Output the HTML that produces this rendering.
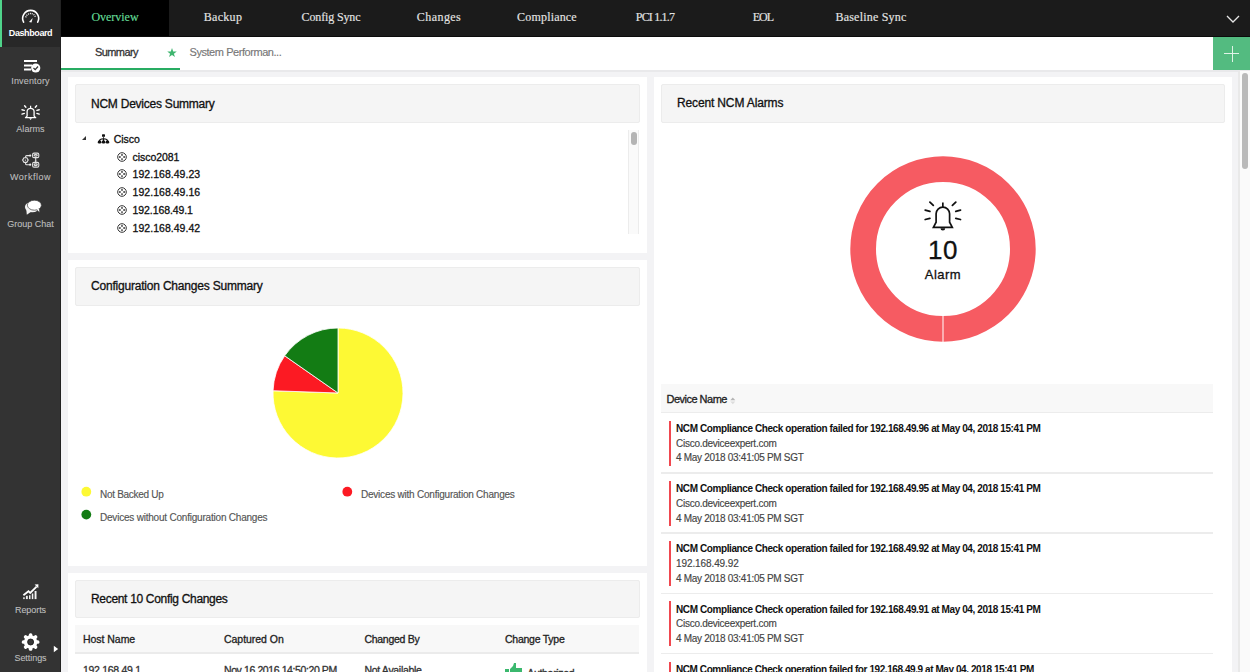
<!DOCTYPE html>
<html><head><meta charset="utf-8">
<style>
*{margin:0;padding:0;box-sizing:border-box}
html,body{width:1250px;height:672px;overflow:hidden;background:#f3f3f5;font-family:"Liberation Sans",sans-serif;position:relative}
.r{position:absolute}
.t{position:absolute;line-height:1;white-space:nowrap}
</style></head><body>
<div class="r" style="left:0px;top:0px;width:61px;height:672px;background:#333333;"></div>
<div class="r" style="left:0px;top:0px;width:61px;height:47px;background:#282828;"></div>
<div class="r" style="left:0px;top:0px;width:2px;height:47px;background:#4fd38a;"></div>
<div class="r" style="left:60px;top:0px;width:1px;height:672px;background:#222;"></div>
<div class="t" style="left:0px;top:29.38px;font-size:9px;color:#fff;font-weight:700;letter-spacing:-0.402px;width:61px;text-align:center;">Dashboard</div>
<div class="t" style="left:0px;top:77.28px;font-size:9px;color:#bdbdbd;letter-spacing:0.159px;width:61px;text-align:center;-webkit-text-stroke:0.1px #bdbdbd;">Inventory</div>
<div class="t" style="left:0px;top:125.38px;font-size:9px;color:#bdbdbd;letter-spacing:0.057px;width:61px;text-align:center;-webkit-text-stroke:0.1px #bdbdbd;">Alarms</div>
<div class="t" style="left:0px;top:172.88px;font-size:9px;color:#bdbdbd;letter-spacing:0.522px;width:61px;text-align:center;-webkit-text-stroke:0.1px #bdbdbd;">Workflow</div>
<div class="t" style="left:0px;top:220.28px;font-size:9px;color:#bdbdbd;letter-spacing:-0.003px;width:61px;text-align:center;-webkit-text-stroke:0.1px #bdbdbd;">Group Chat</div>
<div class="t" style="left:0px;top:606.48px;font-size:9px;color:#bdbdbd;letter-spacing:-0.069px;width:61px;text-align:center;-webkit-text-stroke:0.1px #bdbdbd;">Reports</div>
<div class="t" style="left:0px;top:654.38px;font-size:9px;color:#bdbdbd;letter-spacing:-0.047px;width:61px;text-align:center;-webkit-text-stroke:0.1px #bdbdbd;">Settings</div>
<svg class="r" style="left:0;top:0" width="61" height="672" viewBox="0 0 61 672">
<path d="M23.6 22.2 A8 8 0 1 1 37.7 22.2" fill="none" stroke="#fff" stroke-width="1.6" stroke-linecap="round"/>
<path d="M25.8 17.3 A5 5 0 0 1 35.5 17.3" fill="none" stroke="#fff" stroke-width="1.3" stroke-dasharray="1 0.9"/>
<path d="M29 22.1 L31.5 22.5 L32.7 18 Z" fill="#fff"/>
<g fill="#fff">
 <rect x="24" y="60" width="13" height="2"/>
 <rect x="24" y="64.5" width="8" height="2"/>
 <rect x="24" y="68.5" width="7" height="2"/>
 <circle cx="35.7" cy="68" r="4.6"/>
</g>
<path d="M33.5 68 L35.2 69.7 L38 66.5" fill="none" stroke="#333" stroke-width="1.2"/>
<path d="M27.1 116.1 L27.1 111.8 A3.5 3.5 0 0 1 34.1 111.8 L34.1 116.1 L35.7 117.7 L25.5 117.7 Z" fill="none" stroke="#fff" stroke-width="1.3" stroke-linejoin="round"/>
<path d="M30.6 105.8 V108" stroke="#fff" stroke-width="1.2"/>
<path d="M29.2 118.2 L30.6 120 L32 118.2 Z" fill="#fff"/>
<g stroke="#fff" stroke-width="1.4" stroke-linecap="round">
 <path d="M24.6 105.7 L25.9 107.2"/><path d="M36.6 105.7 L35.3 107.2"/>
 <path d="M22 109.8 L24.3 110.4"/><path d="M39.2 109.8 L36.9 110.4"/>
 <path d="M22 114.1 L24.3 113.4"/><path d="M39.2 114.1 L36.9 113.4"/>
</g>
<g fill="none" stroke="#e2e2e2" stroke-width="1.1">
 <path d="M22.6 160.1 L24 157.8 L26.8 157.8 L28.2 160.1 L26.8 162.4 L24 162.4 Z"/>
 <rect x="32.6" y="153.1" width="6.2" height="4.5" rx="1.4"/>
 <rect x="32.6" y="162.4" width="6.2" height="4.7" rx="1.4"/>
 <ellipse cx="35.7" cy="155.35" rx="1.6" ry="0.8"/>
 <ellipse cx="35.7" cy="164.75" rx="1.6" ry="0.9"/>
 <path d="M25.6 157.8 L25.6 156.6 Q25.6 155.6 26.6 155.6 L30 155.6"/>
 <path d="M25.6 162.4 L25.6 163.7 Q25.6 164.7 26.6 164.7 L30 164.7"/>
 <path d="M35.7 157.6 L35.7 161.2"/>
</g>
<g fill="#eee">
 <circle cx="30.2" cy="155.6" r="1.1"/><circle cx="30.2" cy="164.7" r="1.1"/>
 <circle cx="25.4" cy="160.1" r="0.7"/>
 <path d="M34.6 160.8 L36.8 160.8 L35.7 162.2 Z"/>
</g>
<g fill="#f4f4f4">
 <ellipse cx="32.2" cy="207" rx="7.3" ry="5.2"/>
 <path d="M26.3 209.5 L26.8 214.8 L31.5 211.6 Z"/>
</g>
<g fill="#fff" stroke="#3a3a3a" stroke-width="0.7">
 <path d="M36.5 209.6 L39.6 212.6 L39.2 208.6 Z"/>
 <ellipse cx="34.4" cy="205.2" rx="7" ry="5"/>
</g>
<path d="M36.8 209.3 L39.2 211.8 L38.9 208.8 Z" fill="#fff"/>
<path d="M23.4 595.2 L28.5 591.2 L30.2 592.9 L36.6 586.6" fill="none" stroke="#fff" stroke-width="1.8" stroke-linejoin="miter"/>
<path d="M34.6 584.4 L38.4 584.3 L38.3 588.2 Z" fill="#fff"/>
<g fill="#f2f2f2">
 <rect x="23.2" y="597.3" width="1.5" height="1.8"/>
 <rect x="25.9" y="595.8" width="1.9" height="3.3"/>
 <rect x="29" y="595.3" width="1.5" height="3.8"/>
 <rect x="31.8" y="593.5" width="1.5" height="5.6"/>
 <rect x="34.6" y="591" width="1.9" height="8.1"/>
</g>
<g transform="translate(30.6 642)">
 <circle r="6.7" fill="#fff"/>
 <g fill="#fff">
  <rect x="-1.75" y="-8.8" width="3.5" height="17.6" rx="1.5"/>
  <rect x="-1.75" y="-8.8" width="3.5" height="17.6" rx="1.5" transform="rotate(45)"/>
  <rect x="-1.75" y="-8.8" width="3.5" height="17.6" rx="1.5" transform="rotate(90)"/>
  <rect x="-1.75" y="-8.8" width="3.5" height="17.6" rx="1.5" transform="rotate(135)"/>
 </g>
 <circle r="3" fill="#383838" stroke="#111" stroke-width="0.8"/>
</g>
<path d="M53.8 645.8 L58.2 649 L53.8 652.2 Z" fill="#fff"/>
</svg>
<div class="r" style="left:61px;top:0px;width:1189px;height:37px;background:#1b1b1b;"></div>
<div class="r" style="left:61px;top:36px;width:1189px;height:1px;background:#0b0b0b;"></div>
<div class="r" style="left:61px;top:0px;width:108px;height:36px;background:#000;"></div>
<div class="t" style="left:61px;top:11.25px;font-size:12px;color:#64dc97;letter-spacing:-0.033px;font-family:'Liberation Serif',serif;width:108px;text-align:center;-webkit-text-stroke:0.15px #64dc97;">Overview</div>
<div class="t" style="left:169px;top:11.25px;font-size:12px;color:#e4e4e4;letter-spacing:0.289px;font-family:'Liberation Serif',serif;width:108px;text-align:center;-webkit-text-stroke:0.15px #e4e4e4;">Backup</div>
<div class="t" style="left:277px;top:11.25px;font-size:12px;color:#e4e4e4;letter-spacing:-0.134px;font-family:'Liberation Serif',serif;width:108px;text-align:center;-webkit-text-stroke:0.15px #e4e4e4;">Config Sync</div>
<div class="t" style="left:385px;top:11.25px;font-size:12px;color:#e4e4e4;letter-spacing:0.445px;font-family:'Liberation Serif',serif;width:108px;text-align:center;-webkit-text-stroke:0.15px #e4e4e4;">Changes</div>
<div class="t" style="left:493px;top:11.25px;font-size:12px;color:#e4e4e4;letter-spacing:0.180px;font-family:'Liberation Serif',serif;width:108px;text-align:center;-webkit-text-stroke:0.15px #e4e4e4;">Compliance</div>
<div class="t" style="left:601px;top:11.25px;font-size:12px;color:#e4e4e4;letter-spacing:-0.811px;font-family:'Liberation Serif',serif;width:108px;text-align:center;-webkit-text-stroke:0.15px #e4e4e4;">PCI 1.1.7</div>
<div class="t" style="left:709px;top:11.25px;font-size:12px;color:#e4e4e4;letter-spacing:-0.914px;font-family:'Liberation Serif',serif;width:108px;text-align:center;-webkit-text-stroke:0.15px #e4e4e4;">EOL</div>
<div class="t" style="left:817px;top:11.25px;font-size:12px;color:#e4e4e4;letter-spacing:0.206px;font-family:'Liberation Serif',serif;width:108px;text-align:center;-webkit-text-stroke:0.15px #e4e4e4;">Baseline Sync</div>
<svg class="r" style="left:1224px;top:12px" width="18" height="14"><path d="M3 4 L9 10 L15 4" fill="none" stroke="#e6e6e6" stroke-width="1.3"/></svg>
<div class="r" style="left:61px;top:37px;width:1189px;height:33px;background:#fff;"></div>
<div class="r" style="left:61px;top:70px;width:1189px;height:2px;background:#e9e9eb;"></div>
<div class="r" style="left:61px;top:68px;width:119px;height:2.2px;background:#28ac62;"></div>
<div class="t" style="left:95px;top:47.49px;font-size:11px;color:#333;letter-spacing:-0.594px;-webkit-text-stroke:0.3px #333;">Summary</div>
<svg class="r" style="left:166.8px;top:48.4px" width="10" height="9.2" viewBox="0 0 24 22"><path d="M12 0 L14.9 8.1 L23.4 8.3 L16.6 13.5 L19.1 21.7 L12 16.8 L4.9 21.7 L7.4 13.5 L0.6 8.3 L9.1 8.1 Z" fill="#3fb56f"/></svg>
<div class="t" style="left:189.5px;top:47.49px;font-size:11px;color:#777;letter-spacing:-0.443px;-webkit-text-stroke:0.15px #777;">System Performan...</div>
<div class="r" style="left:1213px;top:37px;width:37px;height:33px;background:#53bb80;"></div>
<div class="r" style="left:1224px;top:53px;width:15px;height:1px;background:#dff3e7;"></div>
<div class="r" style="left:1231.5px;top:46px;width:1px;height:16px;background:#dff3e7;"></div>
<div class="r" style="left:61px;top:72px;width:1178px;height:600px;background:#f3f3f5;"></div>
<div class="r" style="left:68px;top:77px;width:579px;height:176px;background:#fff;"></div>
<div class="r" style="left:75px;top:84px;width:565px;height:39px;background:#f5f5f5;border:1px solid #ececec;border-radius:2px;"></div>
<div class="t" style="left:91px;top:97.64px;font-size:12px;color:#111;letter-spacing:-0.234px;-webkit-text-stroke:0.3px #111;">NCM Devices Summary</div>
<div class="r" style="left:68px;top:260px;width:579px;height:306px;background:#fff;"></div>
<div class="r" style="left:75px;top:267px;width:565px;height:39px;background:#f5f5f5;border:1px solid #ececec;border-radius:2px;"></div>
<div class="t" style="left:91px;top:280.04px;font-size:12px;color:#111;letter-spacing:-0.201px;-webkit-text-stroke:0.3px #111;">Configuration Changes Summary</div>
<div class="r" style="left:68px;top:573px;width:579px;height:120px;background:#fff;"></div>
<div class="r" style="left:75px;top:580px;width:565px;height:38px;background:#f5f5f5;border:1px solid #ececec;border-radius:2px;"></div>
<div class="t" style="left:91px;top:592.54px;font-size:12px;color:#111;letter-spacing:-0.317px;-webkit-text-stroke:0.3px #111;">Recent 10 Config Changes</div>
<div class="r" style="left:654px;top:77px;width:578px;height:620px;background:#fff;"></div>
<div class="r" style="left:661px;top:84px;width:564px;height:39px;background:#f5f5f5;border:1px solid #ececec;border-radius:2px;"></div>
<div class="t" style="left:677px;top:97.04px;font-size:12px;color:#111;letter-spacing:-0.144px;-webkit-text-stroke:0.3px #111;">Recent NCM Alarms</div>
<svg class="r" style="left:81px;top:135px" width="6" height="6"><path d="M5 1 L5 5 L1 5 Z" fill="#333"/></svg>
<svg class="r" style="left:97px;top:133px" width="13" height="11" viewBox="0 0 13 11"><g fill="#111">
<rect x="5" y="1.2" width="3" height="2.6" rx="0.6"/><rect x="6.2" y="3.6" width="0.7" height="2.4"/>
<path d="M2.5 8 Q2.5 5.7 6.5 5.7 Q10.5 5.7 10.5 8 M6.5 5.7 V8" fill="none" stroke="#111" stroke-width="1.1"/>
<ellipse cx="2.55" cy="8.9" rx="1.75" ry="1.6"/><ellipse cx="6.5" cy="8.9" rx="1.75" ry="1.6"/><ellipse cx="10.45" cy="8.9" rx="1.75" ry="1.6"/>
<rect x="0.8" y="8.9" width="3.5" height="1.2"/><rect x="4.75" y="8.9" width="3.5" height="1.2"/><rect x="8.7" y="8.9" width="3.5" height="1.2"/>
</g></svg>
<div class="t" style="left:113.8px;top:133.71px;font-size:10.5px;color:#111;letter-spacing:-0.066px;-webkit-text-stroke:0.3px #111;">Cisco</div>
<svg class="r" style="left:116px;top:150.60px" width="12" height="12" viewBox="0 0 12 12"><circle cx="6" cy="6" r="4.3" fill="none" stroke="#333" stroke-width="1"/><g fill="#333"><circle cx="6" cy="3.9" r="0.9"/><circle cx="6" cy="8.1" r="0.9"/><circle cx="3.9" cy="6" r="0.9"/><circle cx="8.1" cy="6" r="0.9"/></g></svg>
<div class="t" style="left:132.6px;top:151.51px;font-size:10.5px;color:#111;letter-spacing:-0.060px;-webkit-text-stroke:0.3px #111;">cisco2081</div>
<svg class="r" style="left:116px;top:168.45px" width="12" height="12" viewBox="0 0 12 12"><circle cx="6" cy="6" r="4.3" fill="none" stroke="#333" stroke-width="1"/><g fill="#333"><circle cx="6" cy="3.9" r="0.9"/><circle cx="6" cy="8.1" r="0.9"/><circle cx="3.9" cy="6" r="0.9"/><circle cx="8.1" cy="6" r="0.9"/></g></svg>
<div class="t" style="left:132.6px;top:169.36px;font-size:10.5px;color:#111;letter-spacing:0.029px;-webkit-text-stroke:0.3px #111;">192.168.49.23</div>
<svg class="r" style="left:116px;top:186.30px" width="12" height="12" viewBox="0 0 12 12"><circle cx="6" cy="6" r="4.3" fill="none" stroke="#333" stroke-width="1"/><g fill="#333"><circle cx="6" cy="3.9" r="0.9"/><circle cx="6" cy="8.1" r="0.9"/><circle cx="3.9" cy="6" r="0.9"/><circle cx="8.1" cy="6" r="0.9"/></g></svg>
<div class="t" style="left:132.6px;top:187.21px;font-size:10.5px;color:#111;letter-spacing:0.029px;-webkit-text-stroke:0.3px #111;">192.168.49.16</div>
<svg class="r" style="left:116px;top:204.15px" width="12" height="12" viewBox="0 0 12 12"><circle cx="6" cy="6" r="4.3" fill="none" stroke="#333" stroke-width="1"/><g fill="#333"><circle cx="6" cy="3.9" r="0.9"/><circle cx="6" cy="8.1" r="0.9"/><circle cx="3.9" cy="6" r="0.9"/><circle cx="8.1" cy="6" r="0.9"/></g></svg>
<div class="t" style="left:132.6px;top:205.06px;font-size:10.5px;color:#111;letter-spacing:-0.092px;-webkit-text-stroke:0.3px #111;">192.168.49.1</div>
<svg class="r" style="left:116px;top:222.00px" width="12" height="12" viewBox="0 0 12 12"><circle cx="6" cy="6" r="4.3" fill="none" stroke="#333" stroke-width="1"/><g fill="#333"><circle cx="6" cy="3.9" r="0.9"/><circle cx="6" cy="8.1" r="0.9"/><circle cx="3.9" cy="6" r="0.9"/><circle cx="8.1" cy="6" r="0.9"/></g></svg>
<div class="t" style="left:132.6px;top:222.91px;font-size:10.5px;color:#111;letter-spacing:0.029px;-webkit-text-stroke:0.3px #111;">192.168.49.42</div>
<div class="r" style="left:628px;top:130px;width:11px;height:104px;background:#fafafa;border-left:1px solid #ececec;border-right:1px solid #ececec;"></div>
<div class="r" style="left:631px;top:132px;width:6px;height:13px;background:#b4b4b4;border-radius:3px;"></div>
<svg class="r" style="left:262px;top:317px" width="152" height="152" viewBox="-76 -76 152 152">
<g stroke="#fff" stroke-width="0.8">
<path d="M0 0 L0 -65 A65 65 0 1 1 -64.96 -2.27 Z" fill="#fdf934"/>
<path d="M0 0 L-64.96 -2.27 A65 65 0 0 1 -53.3 -37.2 Z" fill="#fc1a23"/>
<path d="M0 0 L-53.3 -37.2 A65 65 0 0 1 0 -65 Z" fill="#137c14"/>
</g></svg>
<svg class="r" style="left:80px;top:486px" width="12" height="34"><circle cx="6.3" cy="5.7" r="4.9" fill="#fdf934"/><circle cx="6.3" cy="28.6" r="4.9" fill="#137c14"/></svg>
<svg class="r" style="left:341px;top:486px" width="12" height="12"><circle cx="6.3" cy="5.7" r="4.9" fill="#fc1a23"/></svg>
<div class="t" style="left:100px;top:490.44px;font-size:10px;color:#555;letter-spacing:-0.289px;-webkit-text-stroke:0.15px #555;">Not Backed Up</div>
<div class="t" style="left:361px;top:490.44px;font-size:10px;color:#555;letter-spacing:-0.224px;-webkit-text-stroke:0.15px #555;">Devices with Configuration Changes</div>
<div class="t" style="left:100px;top:513.33px;font-size:10px;color:#555;letter-spacing:-0.209px;-webkit-text-stroke:0.15px #555;">Devices without Configuration Changes</div>
<div class="r" style="left:75px;top:625px;width:564px;height:28px;background:#f8f8f8;"></div>
<div class="r" style="left:75px;top:652px;width:564px;height:1.5px;background:#ebebeb;"></div>
<div class="t" style="left:83px;top:634.11px;font-size:10.5px;color:#222;letter-spacing:-0.039px;-webkit-text-stroke:0.3px #222;">Host Name</div>
<div class="t" style="left:224px;top:634.11px;font-size:10.5px;color:#222;letter-spacing:-0.033px;-webkit-text-stroke:0.3px #222;">Captured On</div>
<div class="t" style="left:364.4px;top:634.11px;font-size:10.5px;color:#222;letter-spacing:-0.266px;-webkit-text-stroke:0.3px #222;">Changed By</div>
<div class="t" style="left:505px;top:634.11px;font-size:10.5px;color:#222;letter-spacing:-0.248px;-webkit-text-stroke:0.3px #222;">Change Type</div>
<div class="t" style="left:83px;top:664.61px;font-size:10.5px;color:#333;letter-spacing:-0.300px;-webkit-text-stroke:0.3px #333;">192.168.49.1</div>
<div class="t" style="left:224px;top:664.61px;font-size:10.5px;color:#333;letter-spacing:-0.400px;-webkit-text-stroke:0.3px #333;">Nov 16 2016 14:50:20 PM</div>
<div class="t" style="left:364.4px;top:664.61px;font-size:10.5px;color:#333;letter-spacing:-0.300px;-webkit-text-stroke:0.3px #333;">Not Available</div>
<svg class="r" style="left:504px;top:662px" width="20" height="12"><path d="M1 7 H5 V12 H1 Z M6 7 L9 4 L10 1 L12 1 L12 6 L18 6 L18 12 L6 12 Z" fill="#3bb86e"/></svg>
<div class="t" style="left:527.2px;top:668.41px;font-size:10.5px;color:#333;letter-spacing:-0.300px;-webkit-text-stroke:0.3px #333;">Authorized</div>
<svg class="r" style="left:843px;top:149px" width="200" height="200" viewBox="-100 -100 200 200">
<circle r="79.85" fill="none" stroke="#f65b62" stroke-width="25.7"/>
<rect x="-0.5" y="66" width="1" height="28" fill="#fff"/>
</svg>
<svg class="r" style="left:922px;top:199px" width="42" height="34" viewBox="0 0 42 34">
<path d="M14.1 23.2 L14.1 14.85 A6.75 6.75 0 0 1 27.6 14.85 L27.6 23.2 L30.3 28.4 L11.4 28.4 Z" fill="none" stroke="#111" stroke-width="1.7" stroke-linejoin="miter"/>
<path d="M20.85 3.6 V8" stroke="#111" stroke-width="1.7"/>
<path d="M18.5 29.2 A2.35 2.35 0 0 0 23.2 29.2 Z" fill="#111"/>
<g stroke="#111" stroke-width="1.8" stroke-linecap="round">
<path d="M7.9 3.2 L11.3 6.4"/><path d="M33.8 3.2 L30.4 6.4"/>
<path d="M3.2 11.1 L7.9 12.4"/><path d="M38.5 11.1 L33.8 12.4"/>
<path d="M3.2 20.5 L7.9 19.3"/><path d="M38.5 20.5 L33.8 19.3"/>
</g></svg>
<div class="t" style="left:843px;top:237.49px;font-size:26px;color:#111;letter-spacing:0.478px;width:200px;text-align:center;-webkit-text-stroke:0.3px #111;">10</div>
<div class="t" style="left:843px;top:267.60px;font-size:13px;color:#111;letter-spacing:0.462px;width:200px;text-align:center;-webkit-text-stroke:0.3px #111;">Alarm</div>
<div class="r" style="left:661px;top:384px;width:552px;height:28px;background:#f8f8f8;"></div>
<div class="r" style="left:661px;top:411.5px;width:552px;height:1.5px;background:#ececec;"></div>
<div class="t" style="left:666.6px;top:393.69px;font-size:11px;color:#222;letter-spacing:-0.523px;-webkit-text-stroke:0.3px #222;">Device Name</div>
<svg class="r" style="left:730px;top:396px" width="6" height="10"><path d="M0.3 4.3 L2.8 1.6 L5.3 4.3 Z" fill="#b5b5b5"/><path d="M0.3 5.6 L2.8 8.3 L5.3 5.6 Z" fill="#dcdcdc"/></svg>
<div class="r" style="left:669px;top:420.6px;width:2px;height:45px;background:#f0474f;"></div>
<div class="t" style="left:676px;top:423.94px;font-size:10px;color:#111;font-weight:700;letter-spacing:-0.406px;">NCM Compliance Check operation failed for 192.168.49.96 at May 04, 2018 15:41 PM</div>
<div class="t" style="left:676px;top:438.64px;font-size:10px;color:#444;letter-spacing:-0.255px;-webkit-text-stroke:0.15px #444;">Cisco.deviceexpert.com</div>
<div class="t" style="left:676px;top:453.44px;font-size:10px;color:#444;letter-spacing:-0.291px;-webkit-text-stroke:0.15px #444;">4 May 2018 03:41:05 PM SGT</div>
<div class="r" style="left:661px;top:472.0px;width:552px;height:1.5px;background:#ececec;"></div>
<div class="r" style="left:669px;top:480.85px;width:2px;height:45px;background:#f0474f;"></div>
<div class="t" style="left:676px;top:484.19px;font-size:10px;color:#111;font-weight:700;letter-spacing:-0.406px;">NCM Compliance Check operation failed for 192.168.49.95 at May 04, 2018 15:41 PM</div>
<div class="t" style="left:676px;top:498.89px;font-size:10px;color:#444;letter-spacing:-0.255px;-webkit-text-stroke:0.15px #444;">Cisco.deviceexpert.com</div>
<div class="t" style="left:676px;top:513.68px;font-size:10px;color:#444;letter-spacing:-0.291px;-webkit-text-stroke:0.15px #444;">4 May 2018 03:41:05 PM SGT</div>
<div class="r" style="left:661px;top:532.25px;width:552px;height:1.5px;background:#ececec;"></div>
<div class="r" style="left:669px;top:541.1px;width:2px;height:45px;background:#f0474f;"></div>
<div class="t" style="left:676px;top:544.43px;font-size:10px;color:#111;font-weight:700;letter-spacing:-0.406px;">NCM Compliance Check operation failed for 192.168.49.92 at May 04, 2018 15:41 PM</div>
<div class="t" style="left:676px;top:559.13px;font-size:10px;color:#444;letter-spacing:-0.096px;-webkit-text-stroke:0.15px #444;">192.168.49.92</div>
<div class="t" style="left:676px;top:573.93px;font-size:10px;color:#444;letter-spacing:-0.291px;-webkit-text-stroke:0.15px #444;">4 May 2018 03:41:05 PM SGT</div>
<div class="r" style="left:661px;top:592.5px;width:552px;height:1.5px;background:#ececec;"></div>
<div class="r" style="left:669px;top:601.35px;width:2px;height:45px;background:#f0474f;"></div>
<div class="t" style="left:676px;top:604.68px;font-size:10px;color:#111;font-weight:700;letter-spacing:-0.406px;">NCM Compliance Check operation failed for 192.168.49.91 at May 04, 2018 15:41 PM</div>
<div class="t" style="left:676px;top:619.38px;font-size:10px;color:#444;letter-spacing:-0.255px;-webkit-text-stroke:0.15px #444;">Cisco.deviceexpert.com</div>
<div class="t" style="left:676px;top:634.18px;font-size:10px;color:#444;letter-spacing:-0.291px;-webkit-text-stroke:0.15px #444;">4 May 2018 03:41:05 PM SGT</div>
<div class="r" style="left:661px;top:652.75px;width:552px;height:1.5px;background:#ececec;"></div>
<div class="r" style="left:669px;top:661.6px;width:2px;height:45px;background:#f0474f;"></div>
<div class="t" style="left:676px;top:664.93px;font-size:10px;color:#111;font-weight:700;letter-spacing:-0.423px;">NCM Compliance Check operation failed for 192.168.49.9 at May 04, 2018 15:41 PM</div>
<div class="t" style="left:676px;top:679.63px;font-size:10px;color:#444;letter-spacing:-0.255px;-webkit-text-stroke:0.15px #444;">Cisco.deviceexpert.com</div>
<div class="t" style="left:676px;top:694.43px;font-size:10px;color:#444;letter-spacing:-0.291px;-webkit-text-stroke:0.15px #444;">4 May 2018 03:41:05 PM SGT</div>
<div class="r" style="left:1238px;top:71px;width:12px;height:601px;background:#fafafa;border-left:2px solid #e9e9e9;"></div>
<div class="r" style="left:1242px;top:72.5px;width:6px;height:96px;background:#b9b9b9;border-radius:3px;"></div>
</body></html>
